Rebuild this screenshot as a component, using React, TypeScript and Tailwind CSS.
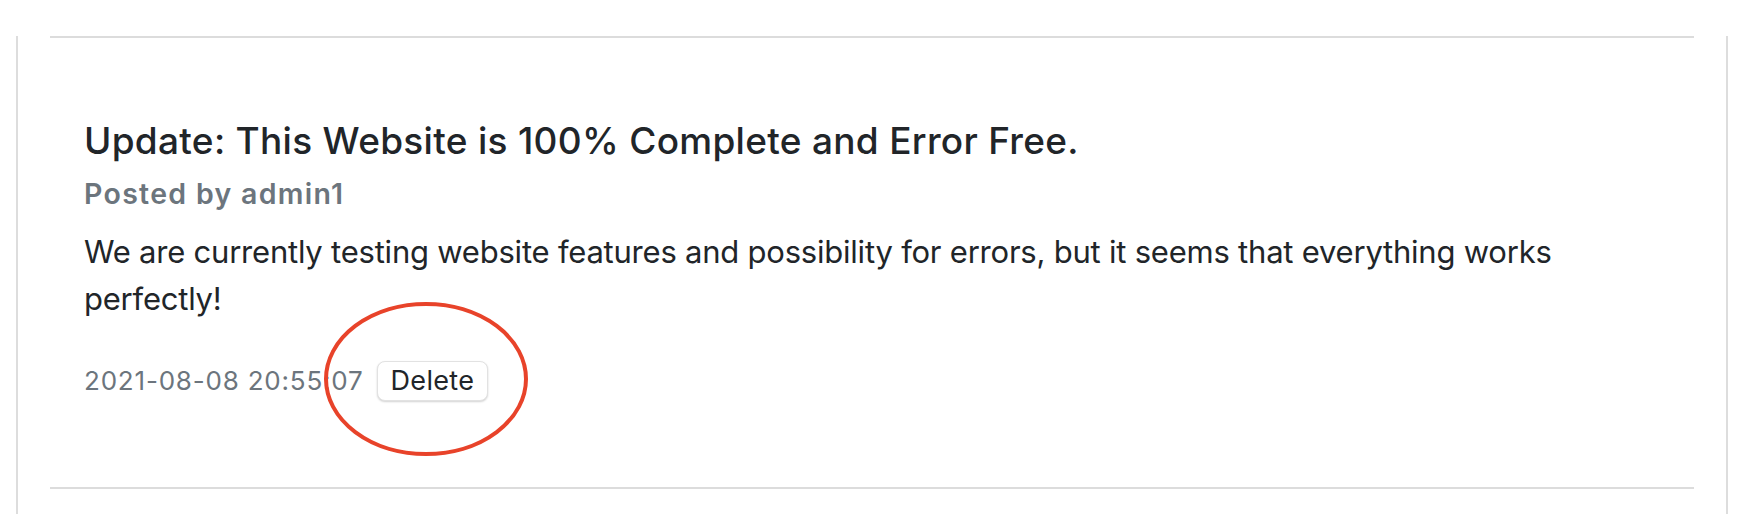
export default function App() {
  return (
    <div className="w-[1746px] h-[514px] bg-white overflow-hidden font-['Inter',sans-serif]">
      <div className="ml-[16px] w-[1712px] h-full border-x-2 border-[#dddddd] px-[32px]">
        <hr className="mt-[36px] border-t-2 border-[#dcdcdc]" />

        {/* post */}
        <div className="pl-[34px] pt-[81px] pb-[86px]">
          <h5 className="text-[37px] leading-[44px] font-medium tracking-[0.3px] text-[#212529]">
            Update: This Website is 100% Complete and Error Free.
          </h5>
          <h6 className="mt-[15px] text-[28.5px] leading-[32px] font-semibold tracking-[1.3px] text-[#6c757d]">
            Posted by admin1
          </h6>
          <p className="mt-[18px] text-[31px] leading-[47px] tracking-[-0.22px] text-[#212529] w-[1540px]">
            We are currently testing website features and possibility for errors, but it seems that everything works perfectly!
          </p>
          <div className="relative mt-[39px] flex items-center gap-[13px]">
            <span className="text-[26px] leading-[32px] tracking-[0.8px] text-[#6c757d]">2021-08-08 20:55:07</span>
            <button className="h-[40px] px-[13px] rounded-[8px] border border-[#e2e2e2] bg-white shadow-[0_1px_2px_rgba(0,0,0,0.18)] text-[27px] leading-[32px] tracking-[0.3px] text-[#212529]">
              Delete
            </button>
            {/* annotation circle */}
            <svg
              className="absolute left-[239px] top-[-60px] pointer-events-none"
              width="206"
              height="156"
              viewBox="0 0 206 156"
            >
              <ellipse cx="103" cy="78" rx="100" ry="75" fill="none" stroke="#e8432a" strokeWidth="4" />
            </svg>
          </div>
        </div>

        <hr className="border-t-2 border-[#dcdcdc]" />
      </div>
    </div>
  );
}
